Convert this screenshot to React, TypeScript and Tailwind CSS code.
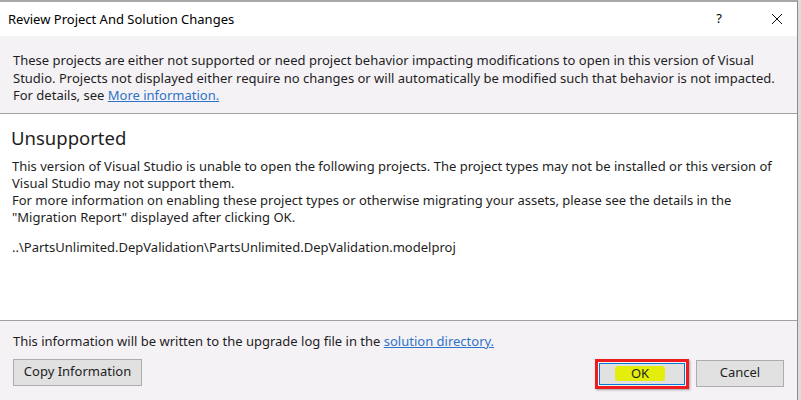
const App = () => {
  return (
    <div className="w-[801px] h-[400px] bg-[#dcdcdc] overflow-hidden" style={{ fontFamily: '"Noto Sans", "Open Sans", sans-serif' }}>
      <div className="w-[798px] h-[400px] flex flex-col border-t-2 border-t-[#a8a8a8] border-r border-r-[#8c8c8c] bg-white text-[#1e1e1e]">
        {/* title bar */}
        <div className="h-[34px] flex items-center justify-between pl-2 pr-[10px] bg-white">
          <span className="text-[13px] text-black mt-[1px]">Review Project And Solution Changes</span>
          <div className="flex items-center gap-[49px]">
            <span className="text-[13px] text-black">?</span>
            <svg width="12" height="12" viewBox="0 0 12 12" className="mr-[4px]">
              <path d="M1 1 L11 11 M11 1 L1 11" stroke="#111" strokeWidth="1" />
            </svg>
          </div>
        </div>

        {/* banner */}
        <div className="bg-[#f5f2f6] pl-[13px] pr-2 pt-4 pb-[8px] text-[13px] leading-[17.5px] border-b border-b-[#a0a0a0] whitespace-nowrap">
          <p>
            These projects are either not supported or need project behavior impacting modifications to open in this version of Visual
            <br />
            Studio. Projects not displayed either require no changes or will automatically be modified such that behavior is not impacted.
            <br />
            For details, see <a className="text-[#2f73c6] underline">More information.</a>
          </p>
        </div>

        {/* content */}
        <div className="flex-1 bg-white pl-[11px] pr-2 pt-[10px]">
          <h2 className="text-[18.5px] leading-[27px] text-[#1e1e1e]">Unsupported</h2>
          <div className="mt-[7px] text-[13px] leading-[17.3px] pl-[1px] whitespace-nowrap">
            <p>
              This version of Visual Studio is unable to open the following projects. The project types may not be installed or this version of
              <br />
              Visual Studio may not support them.
              <br />
              For more information on enabling these project types or otherwise migrating your assets, please see the details in the
              <br />
              "Migration Report" displayed after clicking OK.
            </p>
            <p className="mt-[12px]">..\PartsUnlimited.DepValidation\PartsUnlimited.DepValidation.modelproj</p>
          </div>
        </div>

        {/* footer */}
        <div className="h-[80px] bg-[#f5f2f6] border-t border-t-[#a0a0a0] pl-[13px] pr-[13px] pt-[12px] text-[13px]">
          <p className="leading-[17.5px]">
            This information will be written to the upgrade log file in the{' '}
            <a className="text-[#2f73c6] underline">solution directory.</a>
          </p>
          <div className="mt-[8px] flex items-start">
            <button className="w-[129px] h-[27px] bg-[#e1e1e1] border border-[#adadad] text-[13px] text-[#1e1e1e]">
              Copy Information
            </button>
            <div className="ml-auto border-[3px] border-[#ee1c1c] p-[1px] shadow-[1px_1px_2px_rgba(0,0,0,0.35)]">
              <button className="w-[86px] h-[22px] bg-[#e1e1e1] border border-[#0078d7] text-[13px] flex items-center justify-center">
                <span className="bg-[#e4ee0c] px-[16px] rounded-[3px] leading-[15px] mr-[4px]">OK</span>
              </button>
            </div>
            <button className="ml-[7px] mt-[1px] w-[88px] h-[27px] bg-[#e1e1e1] border border-[#adadad] text-[13px] text-[#1e1e1e]">
              Cancel
            </button>
          </div>
        </div>
      </div>
    </div>
  );
};

export default App;
